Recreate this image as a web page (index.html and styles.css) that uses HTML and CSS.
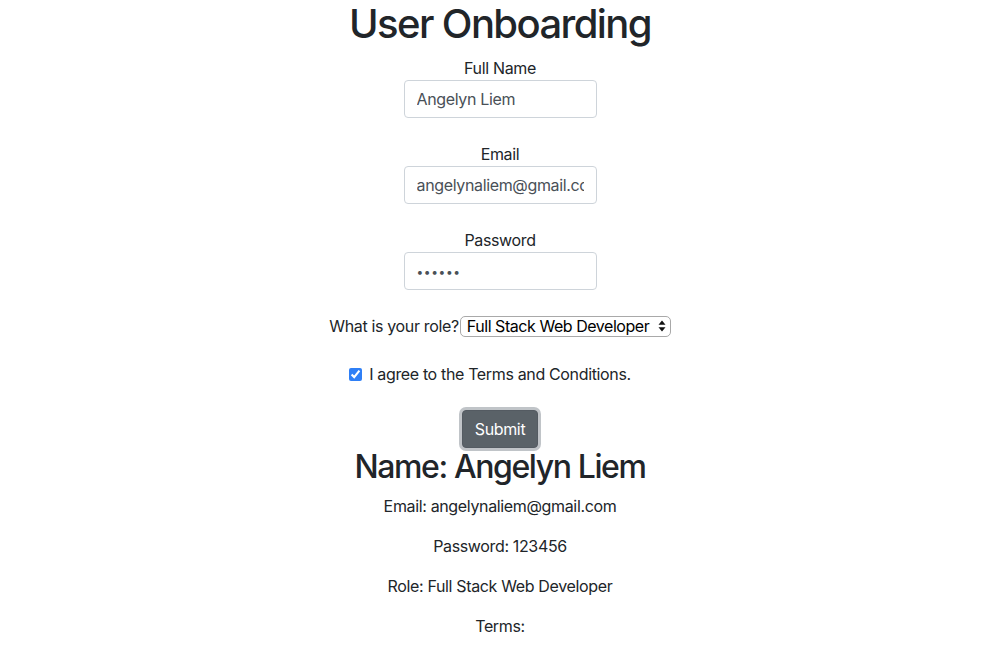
FILE: index.html
```html
<!DOCTYPE html>
<html lang="en">
<head>
<meta charset="utf-8">
<title>User Onboarding</title>
<link rel="stylesheet" href="styles.css">
</head>
<body>
<div class="app">
  <h1 class="title">User Onboarding</h1>
  <form class="form">
    <div class="field">
      <label class="label" for="name">Full Name</label>
      <input class="control" id="name" type="text" value="Angelyn Liem">
    </div>
    <div class="field">
      <label class="label" for="email">Email</label>
      <input class="control" id="email" type="email" value="angelynaliem@gmail.com">
    </div>
    <div class="field">
      <label class="label" for="password">Password</label>
      <input class="control pw" id="password" type="password" value="123456">
    </div>
    <div class="row">
      <label class="inline-label" for="role">What is your role?</label>
      <span class="select-wrap">
        <select class="select" id="role">
          <option>Full Stack Web Developer</option>
        </select>
        <svg class="select-arrows" width="8" height="12" viewBox="0 0 8 12" aria-hidden="true">
          <path d="M4 0.5 L7.5 4.8 H0.5 Z" fill="#111"/>
          <path d="M4 11.5 L7.5 7.2 H0.5 Z" fill="#111"/>
        </svg>
      </span>
    </div>
    <div class="row row-terms">
      <input class="check" id="terms" type="checkbox" checked>
      <label class="inline-label" for="terms">I agree to the Terms and Conditions.</label>
    </div>
    <div class="row">
      <button class="btn" type="button">Submit</button>
    </div>
  </form>
  <div class="result">
    <h2 class="result-name">Name: Angelyn Liem</h2>
    <p class="result-line">Email: angelynaliem@gmail.com</p>
    <p class="result-line">Password: 123456</p>
    <p class="result-line">Role: Full Stack Web Developer</p>
    <p class="result-line">Terms: </p>
  </div>
</div>
</body>
</html>
```

FILE: styles.css
```css
* { box-sizing: border-box; }

html, body {
  margin: 0;
  padding: 0;
  background: #fff;
}

body {
  font-family: Inter, "Liberation Sans", Arial, sans-serif;
  font-size: 16px;
  line-height: 24px;
  letter-spacing: -0.35px;
  color: #212529;
}

.app {
  display: flex;
  flex-direction: column;
  align-items: center;
  text-align: center;
}

.title {
  margin: 0 0 8px;
  font-size: 40px;
  line-height: 48px;
  font-weight: 500;
  letter-spacing: -1.6px;
}

.form {
  display: flex;
  flex-direction: column;
  align-items: center;
  gap: 24px;
}

.field {
  display: flex;
  flex-direction: column;
  align-items: center;
}

.label {
  display: block;
  height: 24px;
}

.control {
  width: 193px;
  height: 38px;
  padding: 6px 12px;
  font: inherit;
  font-size: 16px;
  letter-spacing: -0.35px;
  color: #495057;
  background: #fff;
  border: 1px solid #ced4da;
  border-radius: 4px;
  outline: none;
}

.pw {
  font-size: 12px;
  letter-spacing: 0.6px;
}

.row {
  display: flex;
  align-items: center;
  justify-content: center;
  height: 24px;
}

.row-terms {
  padding-right: 20px;
}

.row:last-child {
  height: 38px;
}

.inline-label {
  white-space: nowrap;
}

.select-wrap {
  position: relative;
  display: inline-flex;
  margin-left: 1px;
}

.select {
  appearance: none;
  -webkit-appearance: none;
  height: 21px;
  width: 211px;
  padding: 0 14px 0 6px;
  font-family: inherit;
  font-size: 16px;
  line-height: 19px;
  letter-spacing: -0.45px;
  color: #000;
  background: #fff;
  border: 1px solid #a9a9a9;
  border-radius: 5px;
  outline: none;
}

.select-arrows {
  position: absolute;
  right: 5px;
  top: 4px;
  pointer-events: none;
}

.check {
  width: 13px;
  height: 13px;
  margin: 0 7px 0 0;
  accent-color: #2f7ff6;
}

.btn {
  height: 38px;
  padding: 6px 12px;
  font: inherit;
  font-size: 16px;
  letter-spacing: -0.35px;
  color: #fff;
  background: #5a6268;
  border: 1px solid #545b62;
  border-radius: 4px;
  box-shadow: 0 0 0 3px rgba(130, 138, 145, 0.5);
}

.result {
  display: flex;
  flex-direction: column;
  align-items: center;
}

.result-name {
  margin: 0 0 8px;
  font-size: 32px;
  line-height: 38px;
  font-weight: 500;
  letter-spacing: -1.4px;
}

.result-line {
  margin: 0 0 16px;
}
```
